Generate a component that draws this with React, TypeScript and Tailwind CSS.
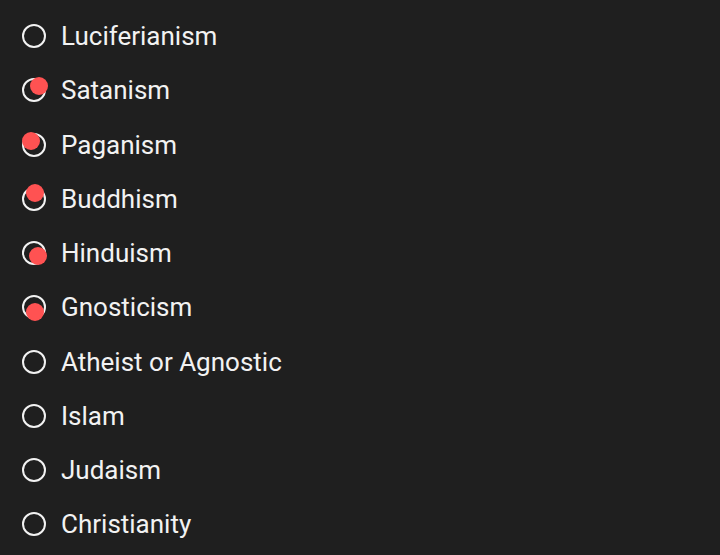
import React from "react";

type Option = {
    label: string;
    dot?: string;
};

const options: Option[] = [
    { label: "Luciferianism" },
    { label: "Satanism", dot: "translate-x-[5px] -translate-y-[4px]" },
    { label: "Paganism", dot: "-translate-x-[3px] -translate-y-[4px]" },
    { label: "Buddhism", dot: "translate-x-[1px] -translate-y-[6px]" },
    { label: "Hinduism", dot: "translate-x-[4px] translate-y-[3px]" },
    { label: "Gnosticism", dot: "translate-x-[1px] translate-y-[5px]" },
    { label: "Atheist or Agnostic" },
    { label: "Islam" },
    { label: "Judaism" },
    { label: "Christianity" },
];

const Radio = ({ dot }: { dot?: string }) => (
    <span className="relative flex items-center justify-center w-[24px] h-[24px] rounded-full border-[2.5px] border-[#f2f2f2] shrink-0">
        {dot && (
            <span
                className={`absolute w-[18px] h-[18px] rounded-full bg-[#ff5252] ${dot}`}
            />
        )}
    </span>
);

const App = () => {
    return (
        <div
            className="w-[720px] h-[555px] bg-[#1f1f1f] pt-[9px] overflow-hidden"
            style={{ fontFamily: "Roboto, 'Noto Sans', sans-serif" }}
        >
            {options.map((o) => (
                <label
                    key={o.label}
                    className="flex items-center h-[54.25px] pl-[22px] gap-[15px] cursor-pointer"
                >
                    <Radio dot={o.dot} />
                    <span className="text-[26px] text-[#f2f2f2] leading-none">
                        {o.label}
                    </span>
                </label>
            ))}
        </div>
    );
};

export default App;
